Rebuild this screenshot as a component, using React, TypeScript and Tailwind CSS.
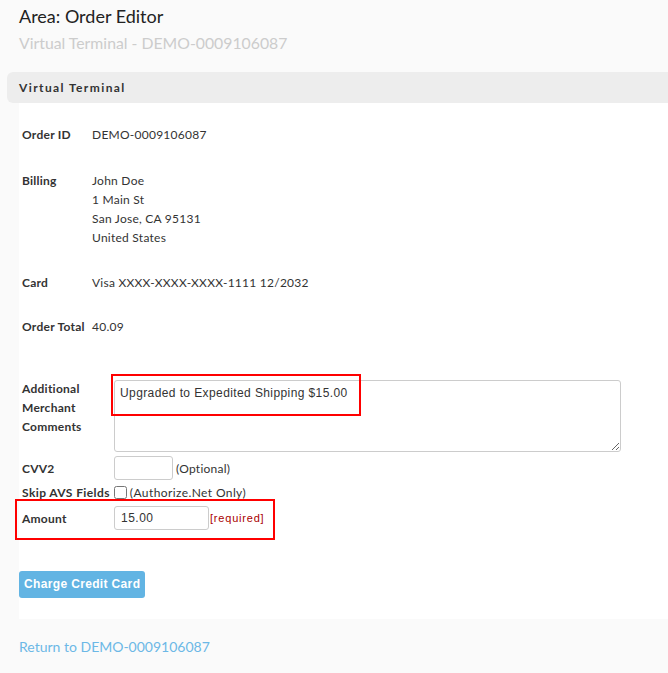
import React from 'react';

const lato = "font-['Lato','Liberation_Sans',sans-serif]";
const arial = "font-['Liberation_Sans',Arial,sans-serif]";

function InfoRow({ label, children, className = '' }: { label: string; children: React.ReactNode; className?: string }) {
  return (
    <div className={`flex ${className}`}>
      <div className="w-[70px] shrink-0 font-bold">{label}</div>
      <div>{children}</div>
    </div>
  );
}

export default function App() {
  return (
    <div className={`min-h-screen bg-[#fafafa] text-[#333] ${lato}`}>
      <div className="pl-[19px] pt-[4px]">
        <h1 className="text-[18px] leading-[24px] text-[#222]">Area: Order Editor</h1>
        <div className="mt-[6px] text-[15.8px] leading-[18px] text-[#ccc]">Virtual Terminal - DEMO-0009106087</div>
      </div>

      <div className="mt-[20px] ml-[7px]">
        <div className="flex h-[31px] items-center rounded-l-[6px] bg-[#ededed] pl-[12px] text-[12px] font-bold tracking-[1.4px] text-[#333]">
          Virtual Terminal
        </div>
        <div className="ml-[12px] bg-white pb-[21px] pl-[3px] pt-[22px] text-[12px] leading-[19px] tracking-[0.25px]">
          <InfoRow label="Order ID">DEMO-0009106087</InfoRow>
          <InfoRow label="Billing" className="mt-[27px]">
            <div>John Doe</div>
            <div>1 Main St</div>
            <div>San Jose, CA 95131</div>
            <div>United States</div>
          </InfoRow>
          <InfoRow label="Card" className="mt-[26px]">Visa XXXX-XXXX-XXXX-1111 12/2032</InfoRow>
          <InfoRow label="Order Total" className="mt-[25px]">40.09</InfoRow>

          <div className="relative mt-[43px]">
            <div className="flex">
              <div className="w-[92px] shrink-0 font-bold">
                <div>Additional</div>
                <div>Merchant</div>
                <div>Comments</div>
              </div>
              <textarea
                className={`mt-[1px] h-[72px] w-[507px] resize-y rounded-[3px] border border-[#ccc] px-[5px] py-[3px] text-[12px] tracking-[0.4px] text-[#333] ${arial}`}
                defaultValue="Upgraded to Expedited Shipping $15.00"
              />
            </div>
            <div className="pointer-events-none absolute left-[89px] top-[-5px] h-[42px] w-[250px] border-2 border-[#ff0000]" />
          </div>

          <div className="mt-[4px] flex items-center">
            <div className="w-[92px] shrink-0 font-bold">CVV2</div>
            <input className="h-[24px] w-[59px] rounded-[3px] border border-[#ccc] bg-white" />
            <span className="ml-[3px]">(Optional)</span>
          </div>

          <div className="mt-[3px] flex items-center tracking-[0.4px]">
            <div className="shrink-0 font-bold">Skip AVS Fields</div>
            <input type="checkbox" className="ml-[4px] h-[13px] w-[13px]" />
            <span className="ml-[3px]">(Authorize.Net Only)</span>
          </div>

          <div className="relative mt-[4px] flex items-center">
            <div className="w-[92px] shrink-0 font-bold">Amount</div>
            <input
              className={`h-[24px] w-[95px] rounded-[3px] border border-[#ccc] bg-white px-[6px] text-[12px] tracking-[0.5px] text-[#333] ${arial}`}
              defaultValue="15.00"
            />
            <span className={`ml-[1px] text-[11px] tracking-[0.8px] text-[#aa0000] ${arial}`}>[required]</span>
            <div className="pointer-events-none absolute left-[-7px] top-[-7px] h-[41px] w-[260px] border-2 border-[#ff0000]" />
          </div>

          <button
            type="button"
            className={`ml-[-3px] mt-[41px] h-[27px] rounded-[3px] bg-[#62b4e3] px-[5px] text-[12px] font-bold tracking-[0.35px] text-white ${arial}`}
          >
            Charge Credit Card
          </button>
        </div>
      </div>

      <div className="pl-[19px] pt-[17px] text-[14px] text-[#6cb8e6]">
        <a href="#">Return to DEMO-0009106087</a>
      </div>
    </div>
  );
}
